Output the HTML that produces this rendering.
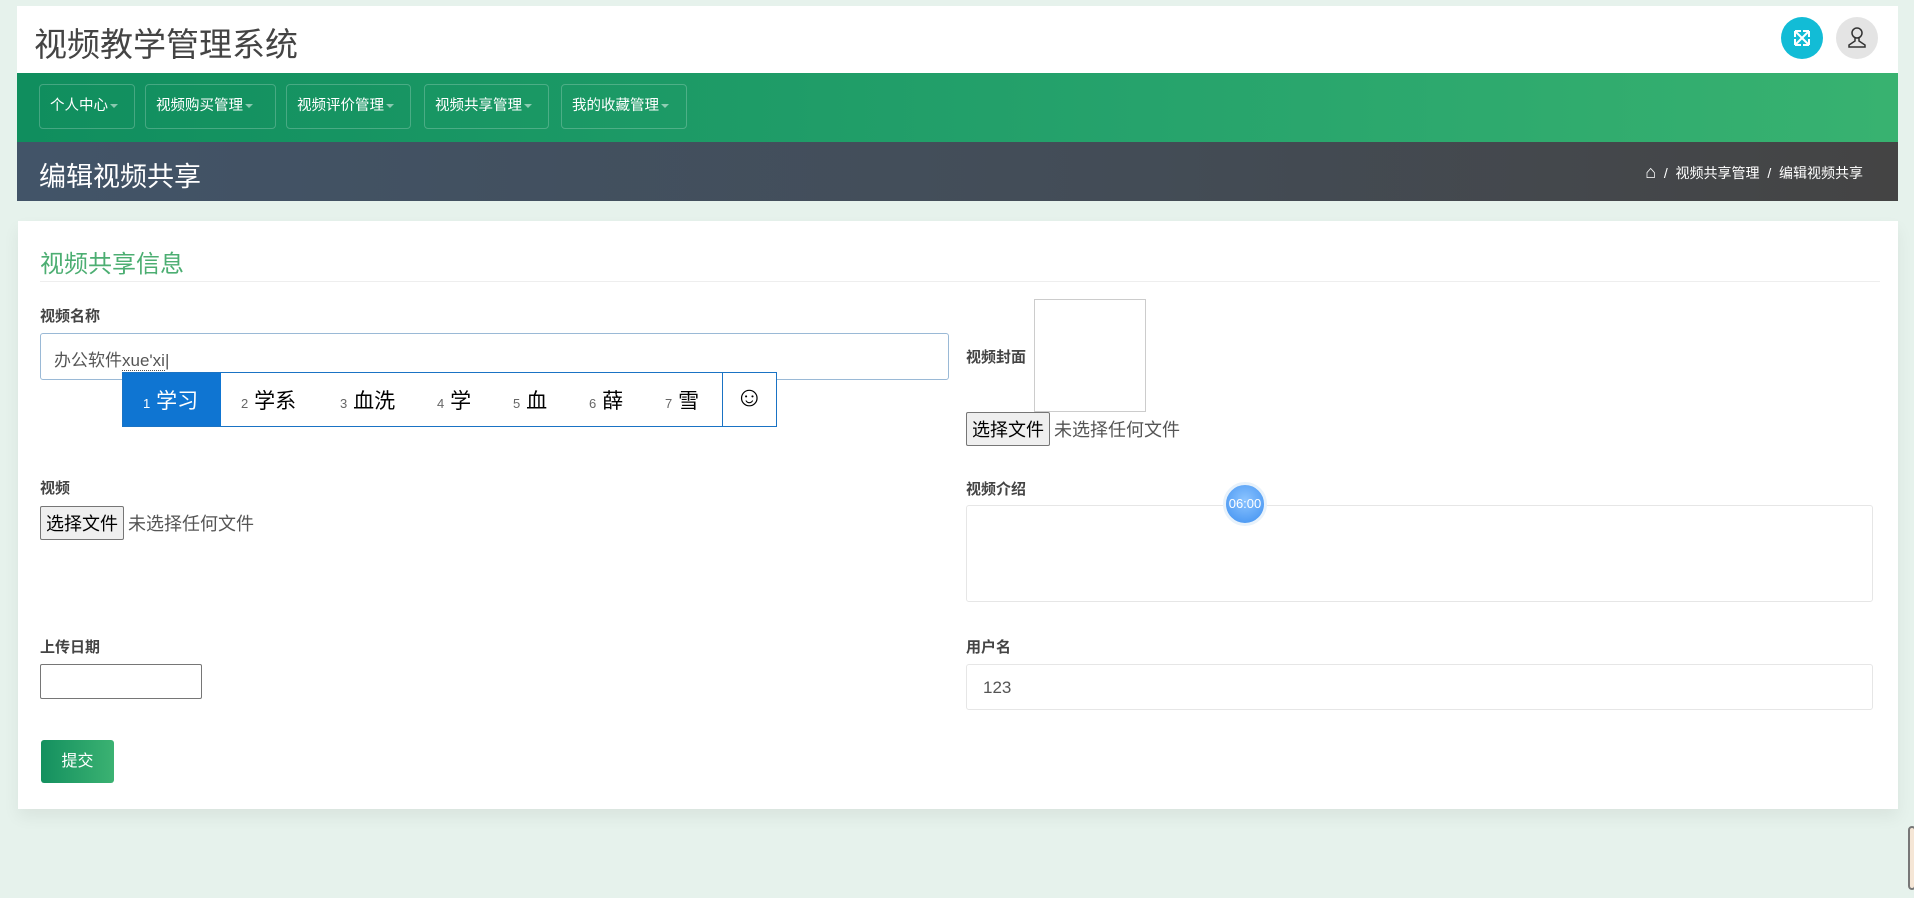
<!DOCTYPE html>
<html><head><meta charset="utf-8"><style>
*{box-sizing:border-box;margin:0;padding:0}
body{width:1914px;height:898px;background:#e6f2ec;font-family:"Liberation Sans","Noto Sans CJK SC",sans-serif;position:relative;overflow:hidden;color:#333}
.abs{position:absolute}
.hdr{left:17px;top:6px;width:1881px;height:67px;background:#fff}
.hdr h1{position:absolute;left:17px;top:12px;font-size:33px;font-weight:normal;color:#444}
.nav{left:17px;top:73px;width:1881px;height:69px;background:linear-gradient(90deg,#108e5e,#26a36c 60%,#38b270)}
.nb{position:absolute;top:11px;height:45px;border:1px solid rgba(255,255,255,.22);border-radius:4px;color:#fff;font-size:14.5px;line-height:43px;padding-left:10px}
.nb i{display:inline-block;vertical-align:middle;margin-left:2px;border:4px solid transparent;border-top-color:rgba(255,255,255,.5);margin-top:4px}
.band{left:17px;top:142px;width:1881px;height:59px;background:linear-gradient(90deg,#425468,#434c56 60%,#444)}
.band h2{position:absolute;left:22px;top:13px;font-size:27px;font-weight:normal;color:#fff}
.bc{position:absolute;right:35px;top:20px;color:#fff;font-size:14px}
.card{left:18px;top:221px;width:1880px;height:588px;background:#fff;box-shadow:0 8px 16px rgba(0,0,0,.06)}
.lbl{position:absolute;font-size:15px;font-weight:bold;color:#444}
.inp{position:absolute;border:1px solid #e6e6e6;border-radius:3px;background:#fff}
.fb{position:absolute;font-size:18px;color:#555;white-space:nowrap}
.fb span{display:inline-block;border:1px solid #767676;background:#efefef;color:#000;border-radius:2px;padding:3px 5px;margin-right:4px}
</style></head><body>
<div class="abs hdr"><h1>视频教学管理系统</h1>
<div class="abs" style="left:1764px;top:11px;width:42px;height:42px;border-radius:50%;background:#12bcd6">
<svg width="42" height="42" viewBox="0 0 42 42" fill="none" stroke="#fff" stroke-width="2"><path d="M14 14l14 14M28 14l-14 14M14 14v6M14 14h6M28 14h-6M28 14v6M14 28v-6M14 28h6M28 28h-6M28 28v-6"/></svg></div>
<div class="abs" style="left:1819px;top:11px;width:42px;height:42px;border-radius:50%;background:#e4e4e4">
<svg width="42" height="42" viewBox="0 0 42 42" fill="none" stroke="#333" stroke-width="1.5"><circle cx="21" cy="16" r="5"/><path d="M19 21v3l-6 4v2h16v-2l-6-4v-3"/></svg></div>
</div>
<div class="abs nav">
<div class="nb" style="left:22px;width:96px">个人中心<i></i></div>
<div class="nb" style="left:128px;width:131px">视频购买管理<i></i></div>
<div class="nb" style="left:269px;width:125px">视频评价管理<i></i></div>
<div class="nb" style="left:407px;width:125px">视频共享管理<i></i></div>
<div class="nb" style="left:544px;width:126px">我的收藏管理<i></i></div>
</div>
<div class="abs band"><h2>编辑视频共享</h2><div class="bc"><span style="font-size:18px">⌂</span> &nbsp;/&nbsp; 视频共享管理 &nbsp;/&nbsp; 编辑视频共享</div></div>
<div class="abs card"></div>
<div class="abs" style="left:40px;top:244px;font-size:24px;color:#4cae72">视频共享信息</div>
<div class="abs" style="left:40px;top:281px;width:1840px;height:1px;background:#eee"></div>
<div class="lbl" style="left:40px;top:305px">视频名称</div>
<div class="inp" style="left:40px;top:333px;width:909px;height:47px;border-color:#9ab9d6"><div style="position:absolute;left:13px;top:12px;font-size:17px;color:#555">办公软件<span style="border-bottom:1px dotted #555">xue'xi</span>|</div></div>
<div class="abs" style="left:122px;top:372px;width:655px;height:55px;background:#fff;border:1px solid #1a73c4;font-size:21px;color:#000">
<div class="abs" style="left:0;top:0;width:98px;height:53px;background:#0f75d2"></div>
<div class="abs" style="left:20px;top:12px;color:#fff"><small style="font-size:13px">1</small> 学习</div>
<div class="abs" style="left:118px;top:12px"><small style="font-size:13px;color:#666">2</small> 学系</div>
<div class="abs" style="left:217px;top:12px"><small style="font-size:13px;color:#666">3</small> 血洗</div>
<div class="abs" style="left:314px;top:12px"><small style="font-size:13px;color:#666">4</small> 学</div>
<div class="abs" style="left:390px;top:12px"><small style="font-size:13px;color:#666">5</small> 血</div>
<div class="abs" style="left:466px;top:12px"><small style="font-size:13px;color:#666">6</small> 薛</div>
<div class="abs" style="left:542px;top:12px"><small style="font-size:13px;color:#666">7</small> 雪</div>
<div class="abs" style="left:599px;top:0;width:1px;height:53px;background:#1a73c4"></div>
<div class="abs" style="left:612px;top:8px;font-size:28px">☺</div>
</div>
<div class="lbl" style="left:966px;top:346px">视频封面</div>
<div class="abs" style="left:1034px;top:299px;width:112px;height:113px;border:1px solid #ccc"></div>
<div class="fb" style="left:966px;top:412px"><span>选择文件</span>未选择任何文件</div>
<div class="lbl" style="left:40px;top:477px">视频</div>
<div class="fb" style="left:40px;top:506px"><span>选择文件</span>未选择任何文件</div>
<div class="lbl" style="left:966px;top:478px">视频介绍</div>
<div class="inp" style="left:966px;top:505px;width:907px;height:97px"></div>
<div class="abs" style="left:1223px;top:482px;width:44px;height:44px;border-radius:50%;background:radial-gradient(circle at 50% 40%,#8cc4ff,#3d8ff0);border:3px solid #e8f2fb;color:#fff;font-size:13px;text-align:center;line-height:38px">06:00</div>
<div class="lbl" style="left:40px;top:636px">上传日期</div>
<div class="abs" style="left:40px;top:664px;width:162px;height:35px;border:1px solid #767676;border-radius:2px"></div>
<div class="lbl" style="left:966px;top:636px">用户名</div>
<div class="inp" style="left:966px;top:664px;width:907px;height:46px"><div style="position:absolute;left:16px;top:13px;font-size:17px;color:#555">123</div></div>
<div class="abs" style="left:41px;top:740px;width:73px;height:43px;border-radius:3px;background:linear-gradient(90deg,#14905f,#3bb272);color:#fff;font-size:16px;text-align:center;line-height:43px">提交</div>
<div class="abs" style="left:1908px;top:826px;width:8px;height:64px;border:2px solid #777;border-radius:6px;background:#f5e6d6"></div>
</body></html>
